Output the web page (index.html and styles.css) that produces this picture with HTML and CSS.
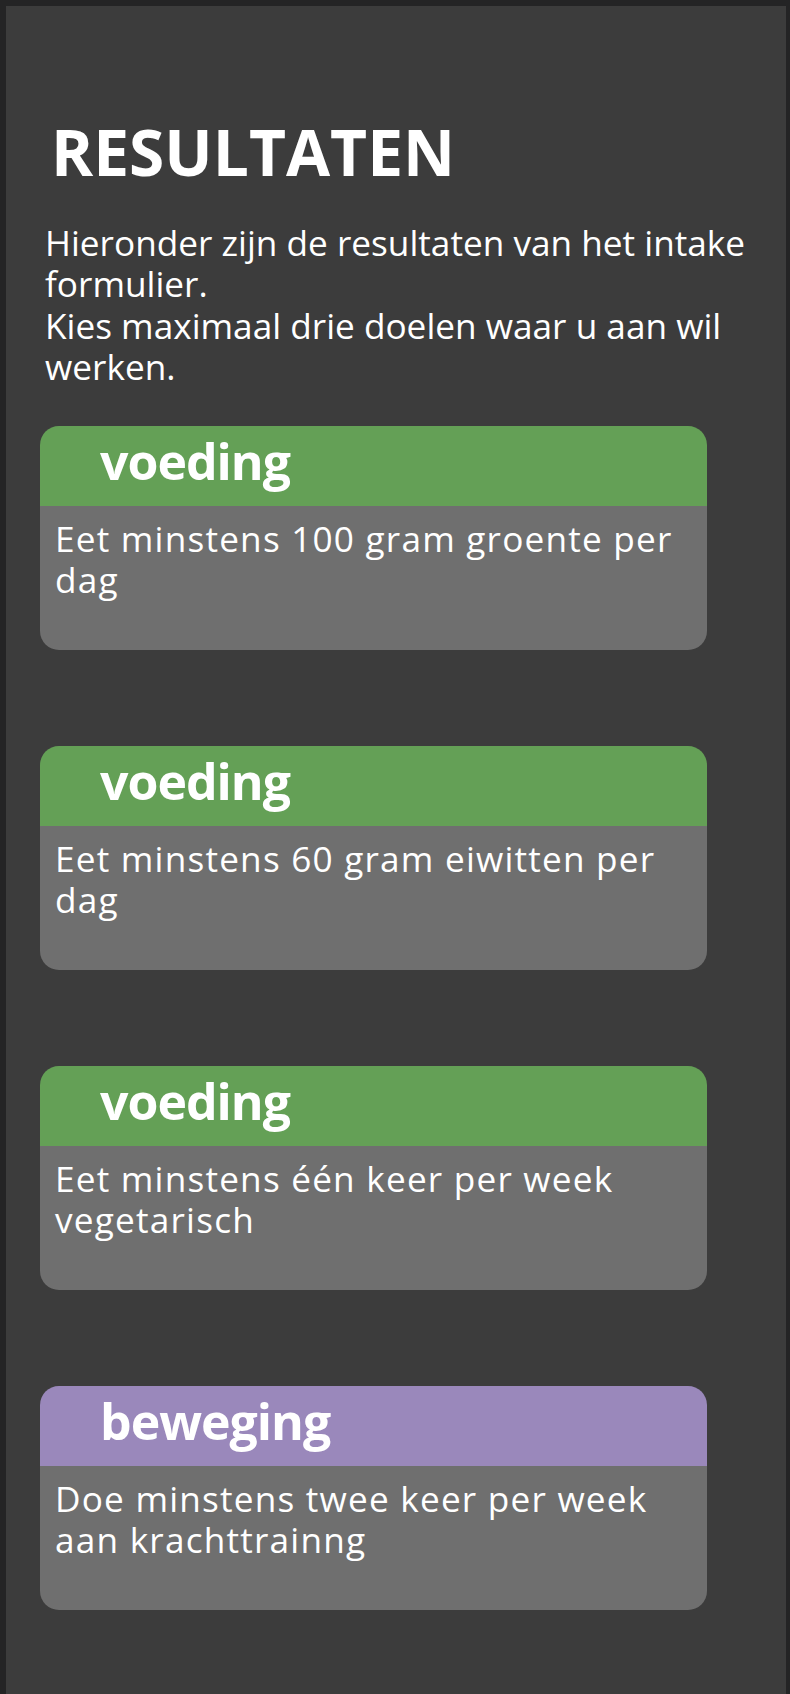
FILE: index.html
```html
<!DOCTYPE html>
<html lang="nl">
<head>
<meta charset="utf-8">
<title>Resultaten</title>
<link rel="stylesheet" href="styles.css">
</head>
<body>
<div class="panel">
  <h1 class="title">RESULTATEN</h1>
  <p class="intro">Hieronder zijn de resultaten van het intake formulier.<br>Kies maximaal drie doelen waar u aan wil werken.</p>
  <div class="cards">
    <div class="card card-voeding">
      <div class="card-head"><h2 class="card-title">voeding</h2></div>
      <div class="card-body">Eet minstens 100 gram groente per dag</div>
    </div>
    <div class="card card-voeding">
      <div class="card-head"><h2 class="card-title">voeding</h2></div>
      <div class="card-body">Eet minstens 60 gram eiwitten per dag</div>
    </div>
    <div class="card card-voeding">
      <div class="card-head"><h2 class="card-title">voeding</h2></div>
      <div class="card-body">Eet minstens één keer per week vegetarisch</div>
    </div>
    <div class="card card-beweging">
      <div class="card-head"><h2 class="card-title">beweging</h2></div>
      <div class="card-body">Doe minstens twee keer per week aan krachttrainng</div>
    </div>
  </div>
</div>
</body>
</html>
```
FILE: styles.css
```css
html, body {
  margin: 0;
  padding: 0;
}
body {
  background: #242425;
  font-family: "Open Sans", "Liberation Sans", sans-serif;
  color: #ffffff;
}
.panel {
  display: flow-root;
  margin: 6px 4px 0 6px;
  background: #3c3c3c;
  padding: 0 0 84px 34px;
}
.title {
  margin: 114px 0 0 11px;
  font-size: 64px;
  line-height: 64px;
  font-weight: 700;
}
.intro {
  margin: 38px 0 0 5px;
  width: 722px;
  font-size: 35.2px;
  line-height: 41.3px;
  font-weight: 400;
}
.cards {
  display: flex;
  flex-direction: column;
  gap: 96px;
  margin-top: 39px;
}
.card {
  width: 667px;
}
.card-head {
  height: 80px;
  padding-left: 60px;
  border-radius: 19px 19px 0 0;
}
.card-voeding .card-head {
  background: #64a056;
}
.card-beweging .card-head {
  background: #9a88bb;
}
.card-title {
  margin: 0;
  font-size: 50px;
  line-height: 71px;
  letter-spacing: -1px;
  font-weight: 700;
}
.card-body {
  height: 144px;
  box-sizing: border-box;
  padding: 12px 16px 0 15px;
  background: #6f6f6f;
  border-radius: 0 0 19px 19px;
  font-size: 35.2px;
  line-height: 41.3px;
  letter-spacing: 1.2px;
}
```
